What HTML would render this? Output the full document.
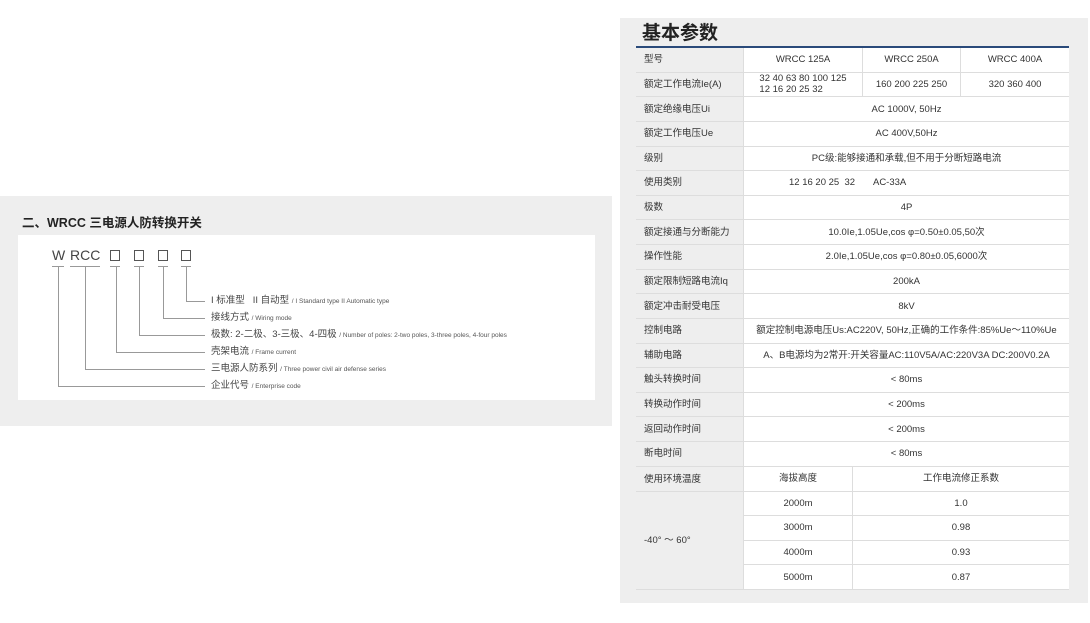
<!DOCTYPE html>
<html><head><meta charset="utf-8"><style>
*{margin:0;padding:0;box-sizing:border-box}
body{width:1090px;height:623px;background:#fff;position:relative;overflow:hidden;font-family:"Liberation Sans","Noto Sans CJK SC",sans-serif;color:#333}
.lp{position:absolute;left:0;top:196px;width:612px;height:230px;background:#eeeeee}
.lp h2{position:absolute;left:22px;top:16px;font-size:12.5px;font-weight:bold;color:#222}
.wb{position:absolute;left:18px;top:39px;width:577px;height:165px;background:#fff}
.a{position:absolute}
.code{font-size:14px;color:#444;top:51px}
.bx{position:absolute;width:10px;height:11px;border:1px solid #555;top:54px}
.ln{position:absolute;background:#999}
.t{position:absolute;left:211px;font-size:9.5px;color:#444;white-space:nowrap;line-height:12px}
.t small{font-size:6.5px;color:#555}
.rp{position:absolute;left:620px;top:18px;width:468px;height:585px;background:#eeeeee}
.rp h1{position:absolute;left:22px;top:0px;font-size:19px;font-weight:bold;color:#222}
.bl{position:absolute;left:16px;top:28px;width:433px;height:2px;background:#2a4a7a}
.g{position:absolute;left:16px;display:grid;font-size:9.5px;color:#333}
.g div{display:flex;align-items:center;justify-content:center;background:#fff;border-bottom:1px solid #ddd;border-left:1px solid #ddd;white-space:nowrap;line-height:11px;text-align:left}
.g div.h{background:#eeeeee;justify-content:flex-start;padding-left:8px;border-left:none}
</style></head><body>
<div class="lp"><h2>二、WRCC 三电源人防转换开关</h2>
<div class="wb"></div>
<div class="a code" style="left:52px">W</div>
<div class="a code" style="left:70px">RCC</div>
<div class="bx" style="left:110px"></div><div class="bx" style="left:134px"></div><div class="bx" style="left:158px"></div><div class="bx" style="left:181px"></div>
<div class="ln" style="left:52px;top:70px;width:12px;height:1px"></div>
<div class="ln" style="left:70px;top:70px;width:30px;height:1px"></div>
<div class="ln" style="left:110px;top:70px;width:10px;height:1px"></div>
<div class="ln" style="left:134px;top:70px;width:10px;height:1px"></div>
<div class="ln" style="left:158px;top:70px;width:10px;height:1px"></div>
<div class="ln" style="left:181px;top:70px;width:10px;height:1px"></div>
<div class="ln" style="left:186px;top:70px;width:1px;height:35px"></div><div class="ln" style="left:186px;top:105px;width:19px;height:1px"></div>
<div class="ln" style="left:163px;top:70px;width:1px;height:52px"></div><div class="ln" style="left:163px;top:122px;width:42px;height:1px"></div>
<div class="ln" style="left:139px;top:70px;width:1px;height:69px"></div><div class="ln" style="left:139px;top:139px;width:66px;height:1px"></div>
<div class="ln" style="left:116px;top:70px;width:1px;height:86px"></div><div class="ln" style="left:116px;top:156px;width:89px;height:1px"></div>
<div class="ln" style="left:85px;top:70px;width:1px;height:103px"></div><div class="ln" style="left:85px;top:173px;width:120px;height:1px"></div>
<div class="ln" style="left:58px;top:70px;width:1px;height:120px"></div><div class="ln" style="left:58px;top:190px;width:147px;height:1px"></div>
<div class="t" style="top:99px">I 标准型 &nbsp; II 自动型 <small>/ I Standard type II Automatic type</small></div>
<div class="t" style="top:116px">接线方式 <small>/ Wiring mode</small></div>
<div class="t" style="top:133px">极数: 2-二极、3-三极、4-四极 <small>/ Number of poles: 2-two poles, 3-three poles, 4-four poles</small></div>
<div class="t" style="top:150px">壳架电流 <small>/ Frame current</small></div>
<div class="t" style="top:167px">三电源人防系列 <small>/ Three power civil air defense series</small></div>
<div class="t" style="top:184px">企业代号 <small>/ Enterprise code</small></div>
</div>
<div class="rp"><h1>基本参数</h1><div class="bl"></div>
<div class="g" style="top:30px;grid-template-columns:107px 119px 98px 109px;grid-template-rows:repeat(17,24.64px)">
<div class="h">型号</div><div>WRCC 125A</div><div>WRCC 250A</div><div>WRCC 400A</div>
<div class="h">额定工作电流Ie(A)</div><div>32 40 63 80 100 125<br>12 16 20 25 32</div><div>160 200 225 250</div><div>320 360 400</div>
<div class="h">额定绝缘电压Ui</div><div style="grid-column:span 3">AC 1000V, 50Hz</div>
<div class="h">额定工作电压Ue</div><div style="grid-column:span 3">AC 400V,50Hz</div>
<div class="h">级别</div><div style="grid-column:span 3">PC级:能够接通和承载,但不用于分断短路电流</div>
<div class="h">使用类别</div><div style="grid-column:span 3;justify-content:flex-start;padding-left:45px">12 16 20 25 &nbsp;32 &nbsp; &nbsp; &nbsp; AC-33A</div>
<div class="h">极数</div><div style="grid-column:span 3">4P</div>
<div class="h">额定接通与分断能力</div><div style="grid-column:span 3">10.0Ie,1.05Ue,cos φ=0.50±0.05,50次</div>
<div class="h">操作性能</div><div style="grid-column:span 3">2.0Ie,1.05Ue,cos φ=0.80±0.05,6000次</div>
<div class="h">额定限制短路电流Iq</div><div style="grid-column:span 3">200kA</div>
<div class="h">额定冲击耐受电压</div><div style="grid-column:span 3">8kV</div>
<div class="h">控制电路</div><div style="grid-column:span 3">额定控制电源电压Us:AC220V, 50Hz,正确的工作条件:85%Ue～110%Ue</div>
<div class="h">辅助电路</div><div style="grid-column:span 3">A、B电源均为2常开:开关容量AC:110V5A/AC:220V3A DC:200V0.2A</div>
<div class="h">触头转换时间</div><div style="grid-column:span 3">&lt; 80ms</div>
<div class="h">转换动作时间</div><div style="grid-column:span 3">&lt; 200ms</div>
<div class="h">返回动作时间</div><div style="grid-column:span 3">&lt; 200ms</div>
<div class="h">断电时间</div><div style="grid-column:span 3">&lt; 80ms</div>
</div>
<div class="g" style="top:448.9px;grid-template-columns:107px 109px 217px;grid-template-rows:repeat(5,24.64px)">
<div class="h" style="align-items:flex-start;padding-top:7px">使用环境温度</div><div>海拔高度</div><div>工作电流修正系数</div>
<div class="h" style="grid-row:span 4;border-bottom:1px solid #ddd">-40° ～ 60°</div><div>2000m</div><div>1.0</div>
<div>3000m</div><div>0.98</div>
<div>4000m</div><div>0.93</div>
<div>5000m</div><div>0.87</div>
</div>
</div>
</body></html>
